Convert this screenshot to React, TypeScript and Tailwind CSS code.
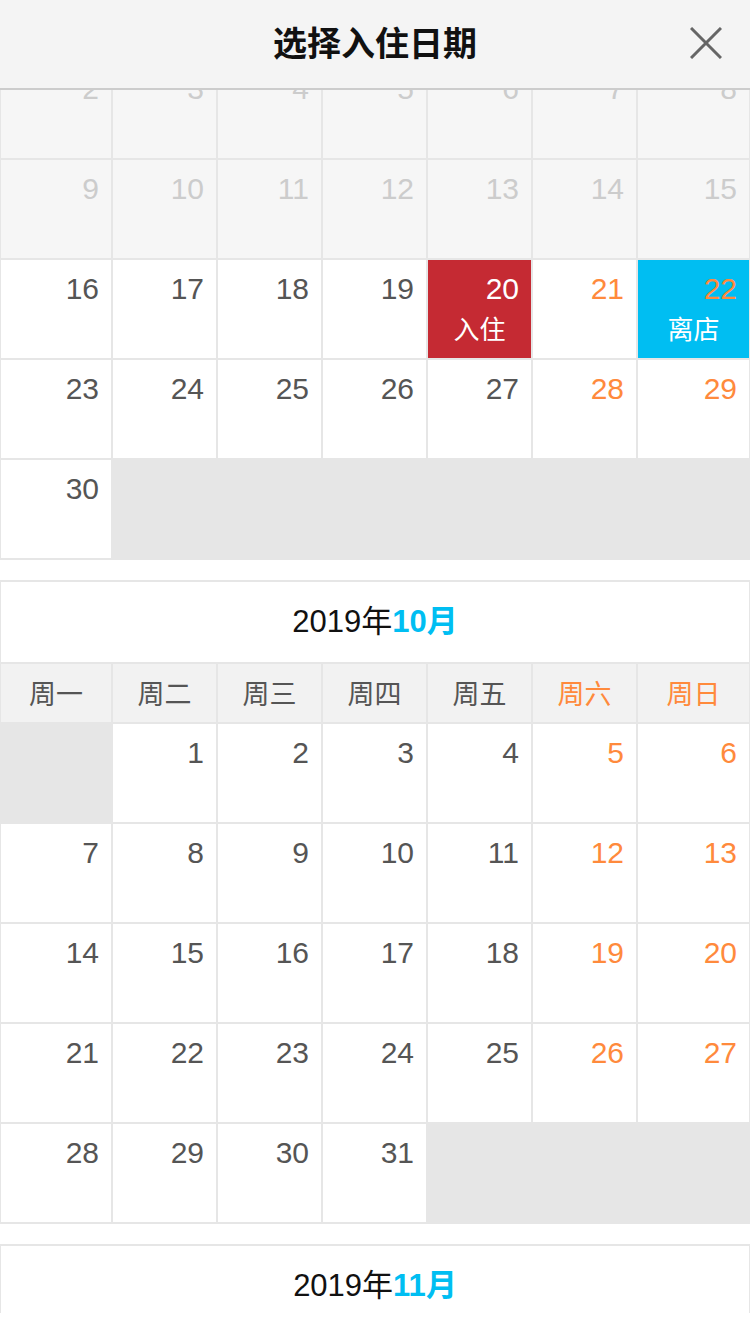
import React from 'react';

type Day = {
  d?: number;
  past?: boolean;
  weekend?: boolean;
  tag?: 'in' | 'out';
};

const FONT = { fontFamily: '"Liberation Sans", Arial, "Noto Sans CJK SC", sans-serif' };

const WEEKDAYS = ['周一', '周二', '周三', '周四', '周五', '周六', '周日'];

// build rows of 7 from a first weekday offset (0 = Monday) and a day count
function buildRows(offset: number, count: number, opts: (d: number) => Partial<Day> = () => ({})) {
  const cells: Day[] = [];
  for (let i = 0; i < offset; i++) cells.push({});
  for (let d = 1; d <= count; d++) {
    const col = cells.length % 7;
    cells.push({ d, weekend: col >= 5, ...opts(d) });
  }
  while (cells.length % 7 !== 0) cells.push({});
  const rows: Day[][] = [];
  for (let i = 0; i < cells.length; i += 7) rows.push(cells.slice(i, i + 7));
  return rows;
}

const DayCell: React.FC<{ day: Day }> = ({ day }) => {
  if (!day.d) return <div className="h-[98px] bg-[#e6e6e6]" />;

  let bg = 'bg-white';
  if (day.past) bg = 'bg-[#f6f6f6]';
  if (day.tag === 'in') bg = 'bg-[#c52a33]';
  if (day.tag === 'out') bg = 'bg-[#00bef2]';

  let color = 'text-[#555555]';
  if (day.weekend) color = 'text-[#ff8a3c]';
  if (day.past) color = 'text-[#cccccc]';
  if (day.tag === 'in') color = 'text-white';

  return (
    <div className={`h-[98px] flex flex-col pt-[12px] ${bg}`}>
      <span className={`self-end pr-3 text-[30px] leading-[34px] ${color}`}>{day.d}</span>
      {day.tag && (
        <span className="self-center mt-[9px] text-[26px] leading-[30px] text-white">
          {day.tag === 'in' ? '入住' : '离店'}
        </span>
      )}
    </div>
  );
};

const MonthTitle: React.FC<{ month: number }> = ({ month }) => (
  <div className="h-[82px] flex items-center justify-center bg-white border-b-2 border-[#e6e6e6] text-[31px] text-[#111111]">
    <span>2019年</span>
    <span className="font-bold text-[#00bef2]">{month}月</span>
  </div>
);

const Grid: React.FC<{ rows: Day[][]; weekdays?: boolean }> = ({ rows, weekdays }) => (
  <div className="grid grid-cols-[110px_103px_103px_103px_103px_103px_1fr] gap-[2px] bg-[#e6e6e6]">
    {weekdays &&
      WEEKDAYS.map((w, i) => (
        <div
          key={w}
          className={`h-[58px] flex items-center justify-center pt-[5px] bg-[#f2f2f2] text-[27px] ${
            i >= 5 ? 'text-[#ff8a3c]' : 'text-[#555555]'
          }`}
        >
          {w}
        </div>
      ))}
    {rows.flat().map((day, i) => (
      <DayCell key={i} day={day} />
    ))}
  </div>
);

export default function App() {
  // September 2019 starts on a Sunday; the first row is scrolled away
  const sept = buildRows(6, 30, (d) => ({
    past: d < 16,
    tag: d === 20 ? 'in' : d === 22 ? 'out' : undefined,
  })).slice(1);
  const oct = buildRows(1, 31);

  return (
    <div className="w-[750px] h-[1334px] overflow-hidden bg-white flex flex-col" style={FONT}>
      <div className="relative h-[90px] shrink-0 flex items-center justify-center bg-[#f4f4f4] border-b-2 border-[#cccccc]">
        <span className="text-[34px] font-bold text-[#111111]">选择入住日期</span>
        <svg
          className="absolute right-[28px] top-[27px]"
          width="32"
          height="32"
          viewBox="0 0 32 32"
          fill="none"
          stroke="#666666"
          strokeWidth="3"
        >
          <path d="M1 1L31 31M31 1L1 31" />
        </svg>
      </div>

      <div className="h-[1223px] shrink-0 overflow-hidden">
        <div className="-mt-[30px] border-x border-b-2 border-[#e6e6e6]">
          <Grid rows={sept} />
        </div>

        <div className="mt-5 border-x border-t-2 border-b-2 border-[#e6e6e6]">
          <MonthTitle month={10} />
          <Grid rows={oct} weekdays />
        </div>

        <div className="mt-5 border-x border-t-2 border-[#e6e6e6]">
          <MonthTitle month={11} />
          <Grid rows={buildRows(4, 30)} weekdays />
        </div>
      </div>
    </div>
  );
}
